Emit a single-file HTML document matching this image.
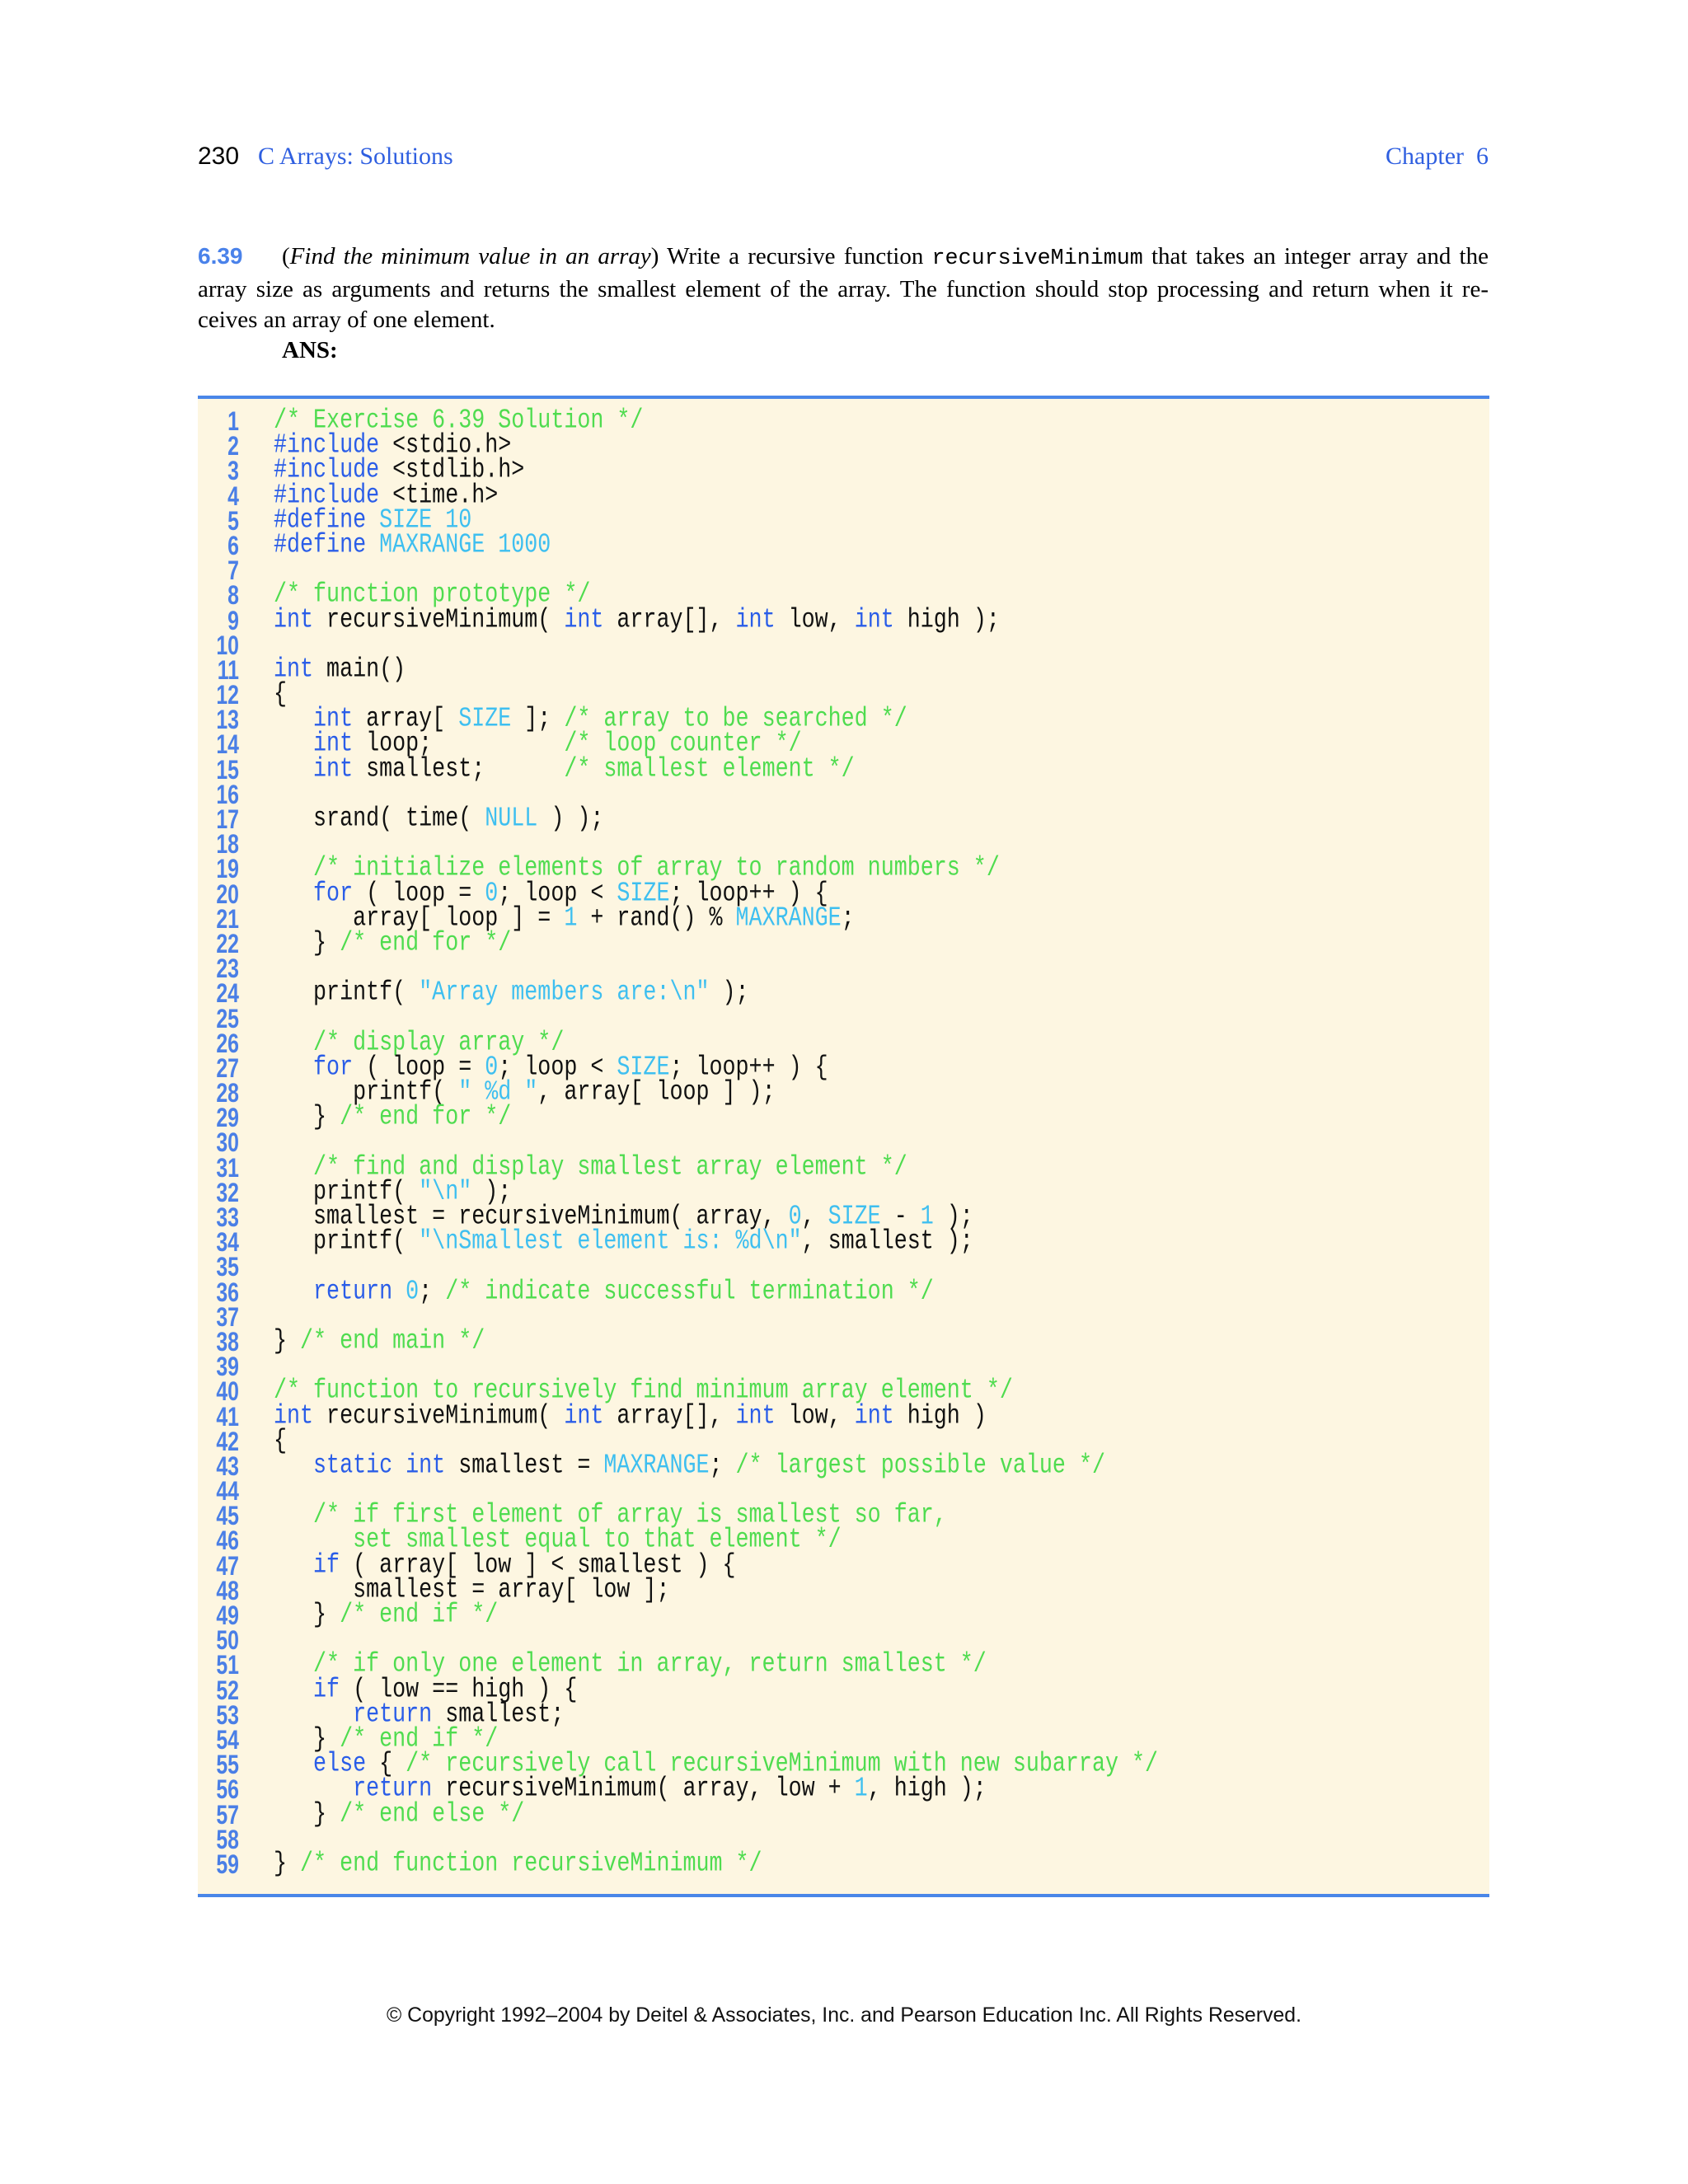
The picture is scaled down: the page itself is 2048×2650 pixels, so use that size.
<!DOCTYPE html>
<html><head><meta charset="utf-8">
<style>
html,body{margin:0;padding:0;background:#fff;}
body{width:2048px;height:2650px;position:relative;overflow:hidden;}
.abs{position:absolute;}
.hdr{top:170px;font-family:"Liberation Serif",serif;font-size:30px;color:#2f5fe0;line-height:40px;}
.pg{font-family:"Liberation Sans",sans-serif;color:#000;font-size:30px;}
.para{left:240px;top:292px;width:1566px;font-family:"Liberation Serif",serif;font-size:29px;line-height:37px;color:#000;}
.para .l{text-align:justify;text-align-last:justify;white-space:nowrap;}
.para .l3{text-align:left;}
.para .num{font-family:"Liberation Sans",sans-serif;color:#4a82ea;font-weight:bold;display:inline-block;width:102px;font-size:28px;}
.mono{font-family:"Liberation Mono",monospace;font-size:26.7px;}
.box{left:240px;top:480px;width:1567px;height:1822px;background:#fdf6e1;border-top:4px solid #4a86e8;border-bottom:4px solid #4a86e8;box-sizing:border-box;}
.code{left:240px;top:496px;}
.ln{height:30.2px;line-height:30.2px;white-space:pre;position:relative;}
.ln .no{position:absolute;left:0;width:50px;text-align:right;font-family:"Liberation Sans",sans-serif;font-weight:bold;font-size:27px;color:#4a7fe6;transform:scale(0.92,1.2);transform-origin:right center;}
.ln .tx{position:absolute;left:92px;font-family:"Liberation Mono",monospace;font-size:26.7px;color:#111;transform:scaleY(1.25);transform-origin:left center;}
.k{color:#2a5de8}.c{color:#4fdc4f}.n{color:#3ebff0}
.copy{left:0;width:2048px;top:2432px;text-align:center;font-family:"Liberation Sans",sans-serif;font-size:24.8px;color:#111;}
</style></head><body>
<div class="abs pg" style="left:240px;top:170px;line-height:40px;">230</div>
<div class="abs hdr" style="left:313px;">C Arrays: Solutions</div>
<div class="abs hdr" style="right:242px;">Chapter&nbsp;&nbsp;6</div>
<div class="abs para">
<div class="l"><span class="num">6.39</span>(<i>Find the minimum value in an array</i>) Write a recursive function <span class="mono">recursiveMinimum</span> that takes an integer array and the</div>
<div class="l">array size as arguments and returns the smallest element of the array. The function should stop processing and return when it re-</div>
<div class="l3">ceives an array of one element.</div>
<div class="l3"><b style="margin-left:102px;">ANS:</b></div>
</div>
<div class="abs box"></div>
<div class="abs code">
<div class="ln"><span class="no">1</span><span class="tx"><span class="c">/* Exercise 6.39 Solution */</span></span></div>
<div class="ln"><span class="no">2</span><span class="tx"><span class="k">#include</span> &lt;stdio.h&gt;</span></div>
<div class="ln"><span class="no">3</span><span class="tx"><span class="k">#include</span> &lt;stdlib.h&gt;</span></div>
<div class="ln"><span class="no">4</span><span class="tx"><span class="k">#include</span> &lt;time.h&gt;</span></div>
<div class="ln"><span class="no">5</span><span class="tx"><span class="k">#define</span> <span class="n">SIZE 10</span></span></div>
<div class="ln"><span class="no">6</span><span class="tx"><span class="k">#define</span> <span class="n">MAXRANGE 1000</span></span></div>
<div class="ln"><span class="no">7</span><span class="tx"></span></div>
<div class="ln"><span class="no">8</span><span class="tx"><span class="c">/* function prototype */</span></span></div>
<div class="ln"><span class="no">9</span><span class="tx"><span class="k">int</span> recursiveMinimum( <span class="k">int</span> array[], <span class="k">int</span> low, <span class="k">int</span> high );</span></div>
<div class="ln"><span class="no">10</span><span class="tx"></span></div>
<div class="ln"><span class="no">11</span><span class="tx"><span class="k">int</span> main()</span></div>
<div class="ln"><span class="no">12</span><span class="tx">{</span></div>
<div class="ln"><span class="no">13</span><span class="tx">   <span class="k">int</span> array[ <span class="n">SIZE</span> ]; <span class="c">/* array to be searched */</span></span></div>
<div class="ln"><span class="no">14</span><span class="tx">   <span class="k">int</span> loop;          <span class="c">/* loop counter */</span></span></div>
<div class="ln"><span class="no">15</span><span class="tx">   <span class="k">int</span> smallest;      <span class="c">/* smallest element */</span></span></div>
<div class="ln"><span class="no">16</span><span class="tx"></span></div>
<div class="ln"><span class="no">17</span><span class="tx">   srand( time( <span class="n">NULL</span> ) );</span></div>
<div class="ln"><span class="no">18</span><span class="tx"></span></div>
<div class="ln"><span class="no">19</span><span class="tx">   <span class="c">/* initialize elements of array to random numbers */</span></span></div>
<div class="ln"><span class="no">20</span><span class="tx">   <span class="k">for</span> ( loop = <span class="n">0</span>; loop &lt; <span class="n">SIZE</span>; loop++ ) {</span></div>
<div class="ln"><span class="no">21</span><span class="tx">      array[ loop ] = <span class="n">1</span> + rand() % <span class="n">MAXRANGE</span>;</span></div>
<div class="ln"><span class="no">22</span><span class="tx">   } <span class="c">/* end for */</span></span></div>
<div class="ln"><span class="no">23</span><span class="tx"></span></div>
<div class="ln"><span class="no">24</span><span class="tx">   printf( <span class="n">"Array members are:\n"</span> );</span></div>
<div class="ln"><span class="no">25</span><span class="tx"></span></div>
<div class="ln"><span class="no">26</span><span class="tx">   <span class="c">/* display array */</span></span></div>
<div class="ln"><span class="no">27</span><span class="tx">   <span class="k">for</span> ( loop = <span class="n">0</span>; loop &lt; <span class="n">SIZE</span>; loop++ ) {</span></div>
<div class="ln"><span class="no">28</span><span class="tx">      printf( <span class="n">" %d "</span>, array[ loop ] );</span></div>
<div class="ln"><span class="no">29</span><span class="tx">   } <span class="c">/* end for */</span></span></div>
<div class="ln"><span class="no">30</span><span class="tx"></span></div>
<div class="ln"><span class="no">31</span><span class="tx">   <span class="c">/* find and display smallest array element */</span></span></div>
<div class="ln"><span class="no">32</span><span class="tx">   printf( <span class="n">"\n"</span> );</span></div>
<div class="ln"><span class="no">33</span><span class="tx">   smallest = recursiveMinimum( array, <span class="n">0</span>, <span class="n">SIZE</span> - <span class="n">1</span> );</span></div>
<div class="ln"><span class="no">34</span><span class="tx">   printf( <span class="n">"\nSmallest element is: %d\n"</span>, smallest );</span></div>
<div class="ln"><span class="no">35</span><span class="tx"></span></div>
<div class="ln"><span class="no">36</span><span class="tx">   <span class="k">return</span> <span class="n">0</span>; <span class="c">/* indicate successful termination */</span></span></div>
<div class="ln"><span class="no">37</span><span class="tx"></span></div>
<div class="ln"><span class="no">38</span><span class="tx">} <span class="c">/* end main */</span></span></div>
<div class="ln"><span class="no">39</span><span class="tx"></span></div>
<div class="ln"><span class="no">40</span><span class="tx"><span class="c">/* function to recursively find minimum array element */</span></span></div>
<div class="ln"><span class="no">41</span><span class="tx"><span class="k">int</span> recursiveMinimum( <span class="k">int</span> array[], <span class="k">int</span> low, <span class="k">int</span> high )</span></div>
<div class="ln"><span class="no">42</span><span class="tx">{</span></div>
<div class="ln"><span class="no">43</span><span class="tx">   <span class="k">static int</span> smallest = <span class="n">MAXRANGE</span>; <span class="c">/* largest possible value */</span></span></div>
<div class="ln"><span class="no">44</span><span class="tx"></span></div>
<div class="ln"><span class="no">45</span><span class="tx">   <span class="c">/* if first element of array is smallest so far,</span></span></div>
<div class="ln"><span class="no">46</span><span class="tx"><span class="c">      set smallest equal to that element */</span></span></div>
<div class="ln"><span class="no">47</span><span class="tx">   <span class="k">if</span> ( array[ low ] &lt; smallest ) {</span></div>
<div class="ln"><span class="no">48</span><span class="tx">      smallest = array[ low ];</span></div>
<div class="ln"><span class="no">49</span><span class="tx">   } <span class="c">/* end if */</span></span></div>
<div class="ln"><span class="no">50</span><span class="tx"></span></div>
<div class="ln"><span class="no">51</span><span class="tx">   <span class="c">/* if only one element in array, return smallest */</span></span></div>
<div class="ln"><span class="no">52</span><span class="tx">   <span class="k">if</span> ( low == high ) {</span></div>
<div class="ln"><span class="no">53</span><span class="tx">      <span class="k">return</span> smallest;</span></div>
<div class="ln"><span class="no">54</span><span class="tx">   } <span class="c">/* end if */</span></span></div>
<div class="ln"><span class="no">55</span><span class="tx">   <span class="k">else</span> { <span class="c">/* recursively call recursiveMinimum with new subarray */</span></span></div>
<div class="ln"><span class="no">56</span><span class="tx">      <span class="k">return</span> recursiveMinimum( array, low + <span class="n">1</span>, high );</span></div>
<div class="ln"><span class="no">57</span><span class="tx">   } <span class="c">/* end else */</span></span></div>
<div class="ln"><span class="no">58</span><span class="tx"></span></div>
<div class="ln"><span class="no">59</span><span class="tx">} <span class="c">/* end function recursiveMinimum */</span></span></div>
</div>
<div class="abs copy">© Copyright 1992–2004 by Deitel &amp; Associates, Inc. and Pearson Education Inc. All Rights Reserved.</div>
</body></html>
